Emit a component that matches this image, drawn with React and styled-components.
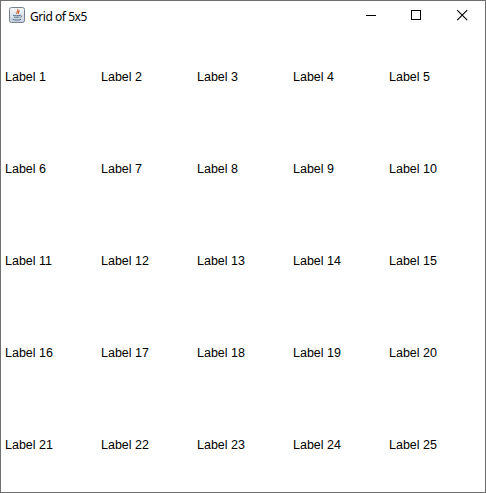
import React from "react";
import styled, { createGlobalStyle } from "styled-components";

const Global = createGlobalStyle`
  html, body { margin: 0; padding: 0; background: #fff; }
  * { box-sizing: border-box; }
`;

const Frame = styled.div`
  width: 486px;
  height: 493px;
  background: #fff;
  border: 1px solid #6f6f6f;
  display: flex;
  flex-direction: column;
  overflow: hidden;
`;

const TitleBar = styled.div`
  height: 30px;
  flex: none;
  display: flex;
  align-items: center;
  padding-left: 8px;
`;

const AppIcon = styled.svg`
  width: 16px;
  height: 16px;
  flex: none;
  margin-bottom: 2px;
`;

const Title = styled.span`
  margin-left: 5px;
  flex: 1;
  font: 12px "Noto Sans", "Open Sans", sans-serif;
  letter-spacing: -0.45px;
  color: #000;
`;

const WinButton = styled.div`
  width: 46px;
  height: 30px;
  padding-bottom: 2px;
  display: flex;
  align-items: center;
  justify-content: center;
`;

const Glyph = styled.svg`
  width: 10px;
  height: 10px;
  overflow: visible;
`;

const Grid = styled.div`
  flex: 1;
  margin-left: 4px;
  display: grid;
  grid-template-columns: repeat(5, 96px);
  grid-template-rows: repeat(5, 92px);
`;

const Label = styled.div`
  display: flex;
  align-items: center;
  font: 12.5px "Liberation Sans", Arial, sans-serif;
  color: #000;
`;

const JavaIcon = () => (
  <AppIcon viewBox="0 0 16 16">
    <defs>
      <linearGradient id="bg" x1="0" y1="0" x2="0" y2="1">
        <stop offset="0" stopColor="#f7f8fa" />
        <stop offset="1" stopColor="#c3cfdd" />
      </linearGradient>
    </defs>
    <rect x="0.5" y="0.5" width="15" height="15" rx="2" fill="url(#bg)" stroke="#75808c" />
    <path d="M8.5 2c1.8 1.8-1.8 2.9-.6 4.9M10.6 3.6c-1.8 1.1-1.6 2.1-.9 3.3" fill="none" stroke="#c8612c" strokeWidth="1.1" />
    <path d="M4 8.2c2 .7 5.5.7 7.5 0M5 10c1.5.5 4 .5 5.5 0M3.5 12.3c2.5 1 6.5 1 8.5 0" fill="none" stroke="#566f8c" strokeWidth="1" />
    <path d="M11.5 8.5c1.5-.3 1.8 1.4-.4 1.9" fill="none" stroke="#566f8c" strokeWidth=".8" />
  </AppIcon>
);

const labels = Array.from({ length: 25 }, (_, i) => `Label ${i + 1}`);

export default function App() {
  return (
    <>
      <Global />
      <Frame>
        <TitleBar>
          <JavaIcon />
          <Title>Grid of 5x5</Title>
          <WinButton>
            <Glyph viewBox="0 0 10 10">
              <path d="M1 5.5h10" stroke="#000" strokeWidth="1" />
            </Glyph>
          </WinButton>
          <WinButton>
            <Glyph viewBox="0 0 10 10">
              <rect x="0.5" y="0.5" width="9" height="9" fill="none" stroke="#000" />
            </Glyph>
          </WinButton>
          <WinButton>
            <Glyph viewBox="0 0 10 10">
              <path d="M.2.2l10 10M10.2.2l-10 10" stroke="#000" strokeWidth="1.1" />
            </Glyph>
          </WinButton>
        </TitleBar>
        <Grid>
          {labels.map((l) => (
            <Label key={l}>{l}</Label>
          ))}
        </Grid>
      </Frame>
    </>
  );
}
